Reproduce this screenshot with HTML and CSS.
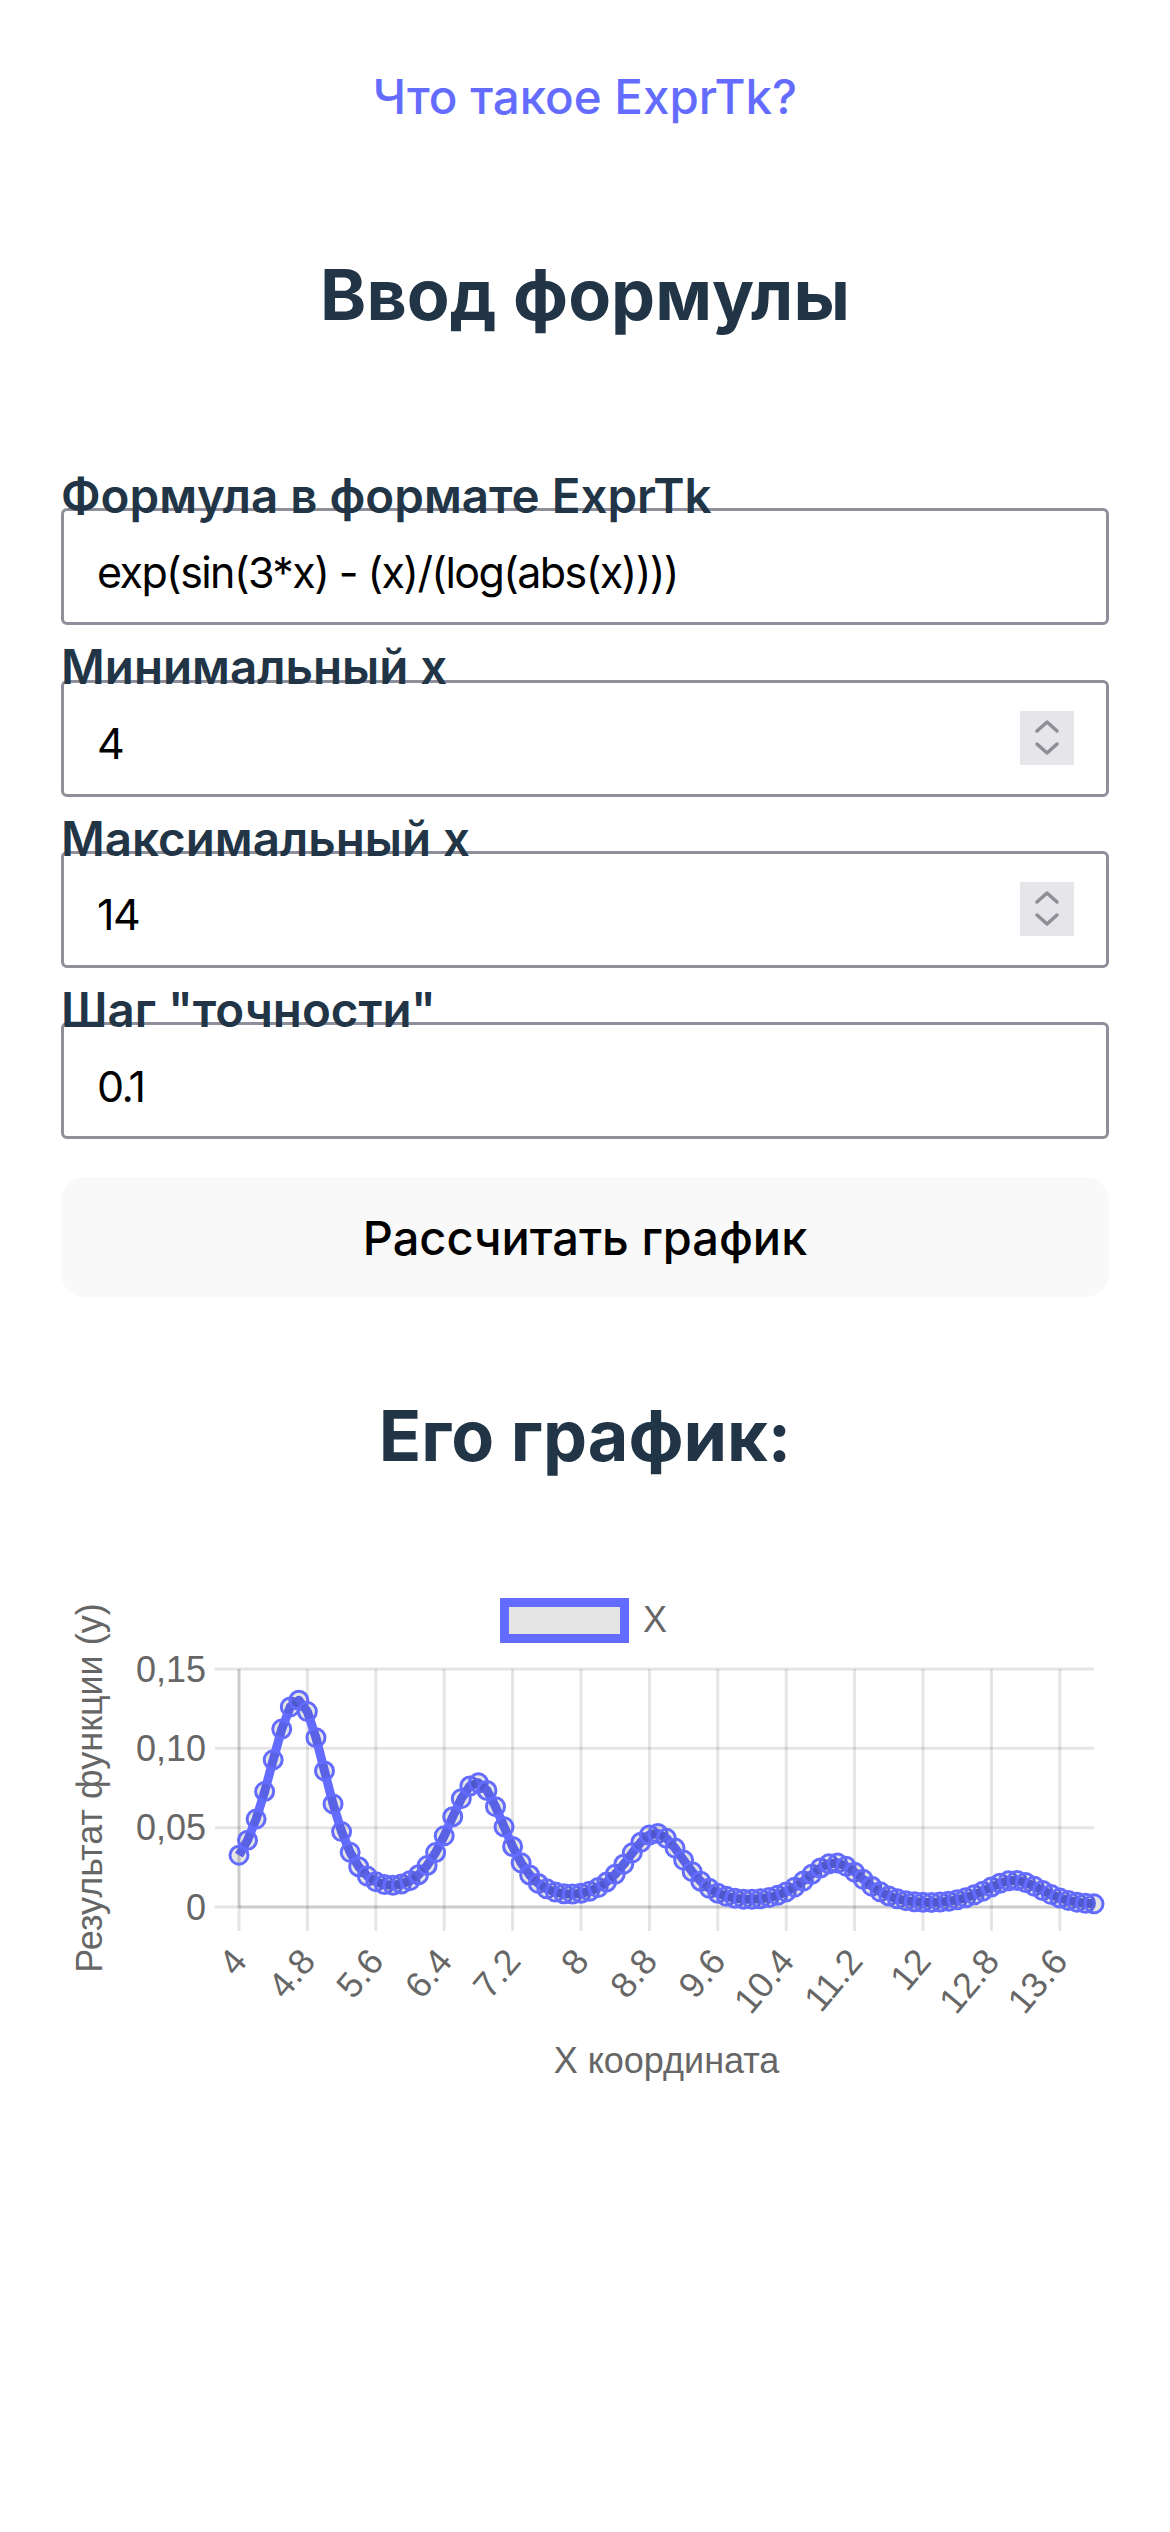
FILE: index.html
```html
<!DOCTYPE html>
<html lang="ru">
<head>
<meta charset="utf-8">
<title>ExprTk</title>
<link rel="stylesheet" href="styles.css">
</head>
<body>
<main class="page">
  <div class="top">
    <a class="top-link" href="#">Что такое ExprTk?</a>
  </div>
  <h1 class="title">Ввод формулы</h1>
  <form class="form">
    <div class="field">
      <label class="label" for="formula">Формула в формате ExprTk</label>
      <div class="box">
        <input class="input" id="formula" type="text" value="exp(sin(3*x) - (x)/(log(abs(x))))">
      </div>
    </div>
    <div class="field">
      <label class="label" for="minx">Минимальный x</label>
      <div class="box">
        <input class="input" id="minx" type="number" value="4">
        <span class="spin"><svg class="spin-icon" viewBox="0 0 54 54" width="54" height="54"><path d="M17 20 L27 11 L37 20"/><path d="M17 33 L27 42 L37 33"/></svg></span>
      </div>
    </div>
    <div class="field">
      <label class="label" for="maxx">Максимальный x</label>
      <div class="box">
        <input class="input" id="maxx" type="number" value="14">
        <span class="spin"><svg class="spin-icon" viewBox="0 0 54 54" width="54" height="54"><path d="M17 20 L27 11 L37 20"/><path d="M17 33 L27 42 L37 33"/></svg></span>
      </div>
    </div>
    <div class="field">
      <label class="label" for="step">Шаг "точности"</label>
      <div class="box">
        <input class="input" id="step" type="text" value="0.1">
      </div>
    </div>
    <button class="calc" type="button">Рассчитать график</button>
  </form>
  <h2 class="title chart-title">Его график:</h2>
  <div class="chart">
    <svg id="plot" class="plot" width="1170" height="700" viewBox="0 1480 1170 700">
      <g class="legend">
        <rect class="legend-box" x="504.5" y="1601.5" width="120" height="36"/>
        <text class="chart-text" x="643" y="1631">X</text>
      </g>
      <g class="grid">
        <line x1="215" y1="1668" x2="1094" y2="1668"/>
        <line x1="215" y1="1747.3" x2="1094" y2="1747.3"/>
        <line x1="215" y1="1826.7" x2="1094" y2="1826.7"/>
        <line x1="215" y1="1906" x2="1094" y2="1906"/>
        <line x1="239" y1="1668" x2="239" y2="1930"/>
        <line x1="307.4" y1="1668" x2="307.4" y2="1930"/>
        <line x1="375.8" y1="1668" x2="375.8" y2="1930"/>
        <line x1="444.2" y1="1668" x2="444.2" y2="1930"/>
        <line x1="512.6" y1="1668" x2="512.6" y2="1930"/>
        <line x1="581" y1="1668" x2="581" y2="1930"/>
        <line x1="649.4" y1="1668" x2="649.4" y2="1930"/>
        <line x1="717.8" y1="1668" x2="717.8" y2="1930"/>
        <line x1="786.2" y1="1668" x2="786.2" y2="1930"/>
        <line x1="854.6" y1="1668" x2="854.6" y2="1930"/>
        <line x1="923" y1="1668" x2="923" y2="1930"/>
        <line x1="991.4" y1="1668" x2="991.4" y2="1930"/>
        <line x1="1059.8" y1="1668" x2="1059.8" y2="1930"/>
        <line x1="239" y1="1906" x2="1094" y2="1906"/>
        <line x1="239" y1="1668" x2="239" y2="1906"/>
      </g>
      <g class="y-ticks">
        <text class="chart-text" x="206" y="1668" dy="0.35em">0,15</text>
        <text class="chart-text" x="206" y="1747.3" dy="0.35em">0,10</text>
        <text class="chart-text" x="206" y="1826.7" dy="0.35em">0,05</text>
        <text class="chart-text" x="206" y="1906" dy="0.35em">0</text>
      </g>
      <g class="x-ticks">
        <text class="chart-text" transform="translate(239,1953) rotate(-50)" dy="0.35em">4</text>
        <text class="chart-text" transform="translate(307.4,1953) rotate(-50)" dy="0.35em">4.8</text>
        <text class="chart-text" transform="translate(375.8,1953) rotate(-50)" dy="0.35em">5.6</text>
        <text class="chart-text" transform="translate(444.2,1953) rotate(-50)" dy="0.35em">6.4</text>
        <text class="chart-text" transform="translate(512.6,1953) rotate(-50)" dy="0.35em">7.2</text>
        <text class="chart-text" transform="translate(581,1953) rotate(-50)" dy="0.35em">8</text>
        <text class="chart-text" transform="translate(649.4,1953) rotate(-50)" dy="0.35em">8.8</text>
        <text class="chart-text" transform="translate(717.8,1953) rotate(-50)" dy="0.35em">9.6</text>
        <text class="chart-text" transform="translate(786.2,1953) rotate(-50)" dy="0.35em">10.4</text>
        <text class="chart-text" transform="translate(854.6,1953) rotate(-50)" dy="0.35em">11.2</text>
        <text class="chart-text" transform="translate(923,1953) rotate(-50)" dy="0.35em">12</text>
        <text class="chart-text" transform="translate(991.4,1953) rotate(-50)" dy="0.35em">12.8</text>
        <text class="chart-text" transform="translate(1059.8,1953) rotate(-50)" dy="0.35em">13.6</text>
      </g>
      <text class="chart-text axis-title" transform="translate(89.5,1787) rotate(-90)" dy="0.35em">Результат функции (у)</text>
      <text class="chart-text axis-title" x="666.5" y="2072">X координата</text>
      <g id="series" class="series"></g>
    </svg>
  </div>
</main>
<script src="script.js"></script>
</body>
</html>
```

FILE: styles.css
```css
html, body {
  margin: 0;
  padding: 0;
  background: #ffffff;
}

body {
  font-family: Inter, "Noto Sans", sans-serif;
  color: #213547;
}

.page {
  width: 1170px;
  display: flex;
  flex-direction: column;
}

.top {
  padding-top: 61px;
  text-align: center;
  font-size: 47.5px;
  line-height: 72px;
}

.top-link {
  font-weight: 500;
  color: #646cff;
  text-decoration: none;
}

.title {
  margin: 119px 0 0;
  font-size: 70px;
  line-height: 86px;
  font-weight: 700;
  text-align: center;
  color: #213547;
}

.form {
  margin: 128px 61px 0;
  display: flex;
  flex-direction: column;
  gap: 12px;
}

.field {
  display: flex;
  flex-direction: column;
}

.label {
  position: relative;
  z-index: 1;
  font-size: 47.5px;
  line-height: 60px;
  font-weight: 600;
  color: #213547;
  margin-bottom: -17.7px;
}

.box {
  height: 117px;
  box-sizing: border-box;
  border: 3px solid #8f8e9b;
  border-radius: 6px;
  display: flex;
  align-items: center;
  background: #ffffff;
}

.input {
  flex: 1;
  min-width: 0;
  height: 100%;
  box-sizing: border-box;
  border: none;
  outline: none;
  background: transparent;
  padding: 10px 0 0 33px;
  margin: 0;
  font-family: Inter, "Noto Sans", sans-serif;
  font-size: 43px;
  letter-spacing: -1.6px;
  color: #000000;
  -moz-appearance: textfield;
}

.input::-webkit-outer-spin-button,
.input::-webkit-inner-spin-button {
  -webkit-appearance: none;
  margin: 0;
}

.spin {
  width: 54px;
  height: 54px;
  margin-right: 32px;
  background: #e5e5ea;
  display: flex;
}

.spin-icon path {
  fill: none;
  stroke: #8e8e96;
  stroke-width: 3.5;
  stroke-linecap: round;
  stroke-linejoin: round;
}

.calc {
  margin-top: 26px;
  height: 120px;
  border: none;
  border-radius: 24px;
  background: #f9f9f9;
  font-family: Inter, "Noto Sans", sans-serif;
  font-size: 47px;
  font-weight: 500;
  color: #000000;
  padding: 0;
}

.chart-title {
  margin-top: 96px;
}

.chart {
  margin-top: 2px;
}

.plot {
  display: block;
}

.chart-text {
  font-family: "Liberation Sans", Arial, sans-serif;
  font-size: 36px;
  fill: #666666;
}

.y-ticks text {
  text-anchor: end;
}

.x-ticks text {
  text-anchor: end;
}

.axis-title {
  text-anchor: middle;
}

.grid line {
  stroke: rgba(0, 0, 0, 0.1);
  stroke-width: 3;
}

.legend-box {
  fill: rgba(0, 0, 0, 0.1);
  stroke: #646cff;
  stroke-width: 9;
}

.series-line {
  fill: none;
  stroke: #646cff;
  stroke-width: 9;
  stroke-linejoin: round;
}

.series-point {
  fill: rgba(0, 0, 0, 0.1);
  stroke: #646cff;
  stroke-width: 3;
}
```

FILE: script.js
```js
(function () {
  var ns = 'http://www.w3.org/2000/svg';
  var g = document.getElementById('series');
  var x0 = 239, x1 = 1094, yBottom = 1906, yTop = 1668;
  var n = 100;
  var pts = [];
  for (var i = 0; i <= n; i++) {
    var x = 4 + i * 0.1;
    var y = Math.exp(Math.sin(3 * x) - x / Math.log(Math.abs(x)));
    var px = x0 + (x1 - x0) * i / n;
    var py = yBottom - (yBottom - yTop) * y / 0.15;
    pts.push([px, py]);
  }
  var line = document.createElementNS(ns, 'polyline');
  line.setAttribute('points', pts.map(function (p) {
    return p[0].toFixed(2) + ',' + p[1].toFixed(2);
  }).join(' '));
  line.setAttribute('class', 'series-line');
  g.appendChild(line);
  pts.forEach(function (p) {
    var c = document.createElementNS(ns, 'circle');
    c.setAttribute('cx', p[0].toFixed(2));
    c.setAttribute('cy', p[1].toFixed(2));
    c.setAttribute('r', '9');
    c.setAttribute('class', 'series-point');
    g.appendChild(c);
  });
})();
```
